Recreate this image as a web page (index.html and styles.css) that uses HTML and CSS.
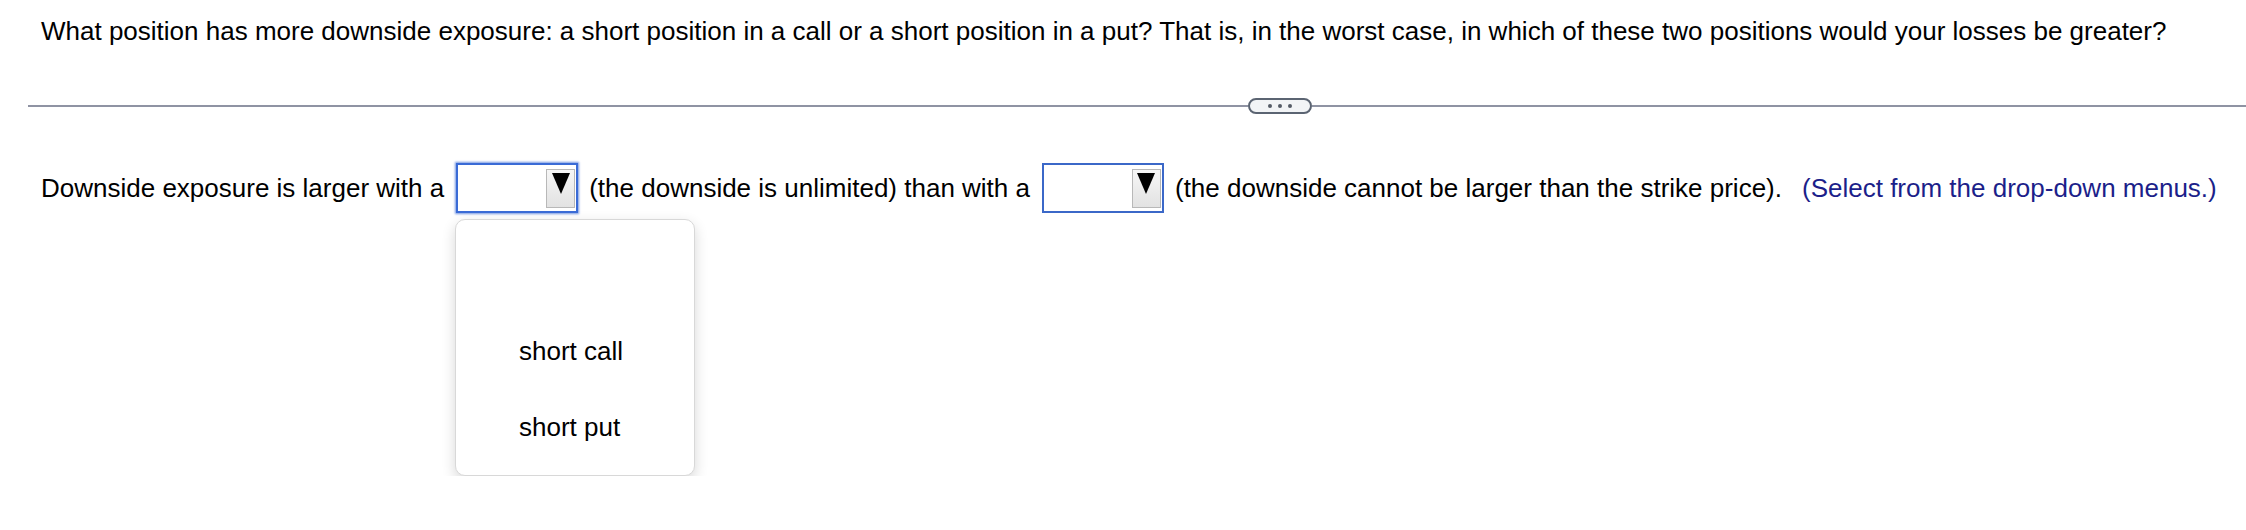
FILE: index.html
```html
<!DOCTYPE html>
<html lang="en">
<head>
  <meta charset="UTF-8">
  <meta name="viewport" content="width=device-width, initial-scale=1.0">
  <title>Short call vs short put</title>
  <link rel="stylesheet" href="styles.css">
</head>
<body>
  <p class="question">What position has more downside exposure: a short position in a call or a short position in a put? That is, in the worst case, in which of these two positions would your losses be greater?</p>

  <div class="divider">
    <div class="rule rule-left"></div>
    <div class="pill"><i></i><i></i><i></i></div>
    <div class="rule rule-right"></div>
  </div>

  <div class="answer">
    <span>Downside exposure is larger with a</span>
    <div class="select focused">
      <div class="arrow"><svg width="18" height="21" viewBox="0 0 18 21"><polygon points="0,0 18,0 9,21" fill="#000"/></svg></div>
    </div>
    <span>(the downside is unlimited) than with a</span>
    <div class="select">
      <div class="arrow"><svg width="18" height="21" viewBox="0 0 18 21"><polygon points="0,0 18,0 9,21" fill="#000"/></svg></div>
    </div>
    <span>(the downside cannot be larger than the strike price).</span>
    <span class="hint">(Select from the drop-down menus.)</span>
  </div>

  <div class="dropdown-panel">
    <div class="choice">short call</div>
    <div class="choice">short put</div>
  </div>
</body>
</html>
```

FILE: styles.css
```css
*{box-sizing: border-box;}
body{
  margin: 0;
  font-family: "Liberation Sans", Arial, sans-serif;
  font-size: 26px;
  color: #000;
  background: #fff;
}
.question{margin: 0; padding: 16px 0 0 41px; white-space: nowrap;}

/* 구분선 */
.divider{
  display: flex; align-items: center;
  height: 16px; margin-top: 51px; padding-left: 28px;
}
.rule{height: 2px; background: #8f93a3;}
.rule-left{width: 1220px;}
.rule-right{flex: 1;}
.pill{
  width: 64px; height: 16px;
  border: 2px solid #5b6472; border-radius: 8px;
  background: #f2f4f6;
  display: flex; align-items: center; justify-content: center; gap: 6px;
}
.pill i{width: 4px; height: 4px; border-radius: 50%; background: #555b66;}

/* 답 줄 */
.answer{
  display: flex; align-items: center;
  margin-top: 49px; padding-left: 41px;
  white-space: nowrap;
}
.select{
  width: 122px; height: 50px;
  margin: 0 11px 0 12px;
  border: 2px solid #3b68c8;
  background: #fff;
  display: flex; align-items: center; justify-content: flex-end;
}
.select.focused{border-color: #3a6bd6; box-shadow: 0 0 2px 1px rgba(58,107,214,.7);}
.arrow{
  width: 29px; height: 39px; margin-right: 1px;
  border: 1px solid #b8b8b8;
  background: linear-gradient(#f6f6f6, #e2e2e2);
  display: flex; justify-content: center; align-items: flex-start;
  padding-top: 3px;
}
.arrow svg{display: block;}
.hint{margin-left: 20px; color: #1c1f8a;}

/* 펼쳐진 목록 (첫번째 select 바로 아래) */
.dropdown-panel{
  width: 240px; height: 257px;
  margin: 6px 0 0 455px;
  border: 1px solid #d8d8d8; border-radius: 10px;
  background: #fff;
  box-shadow: 0 5px 14px rgba(0,0,0,.16);
  padding: 93px 0 0 63px;
}
.choice{line-height: 76px;}
```
